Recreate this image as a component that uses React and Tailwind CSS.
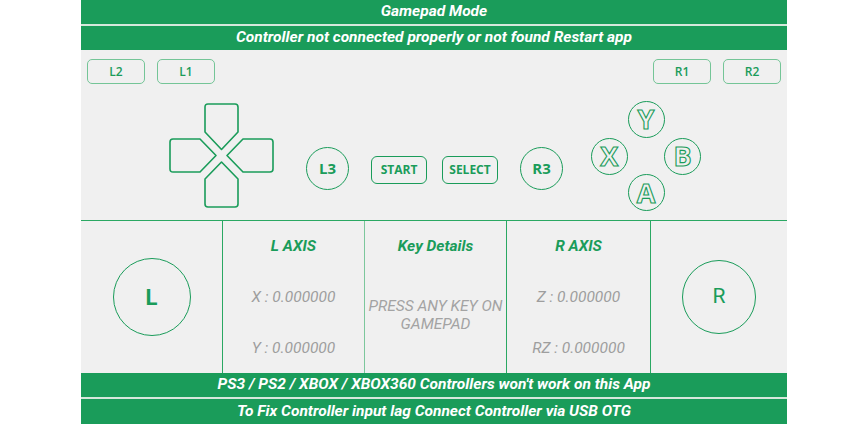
import React from "react";

const G = "#1a9c5a";

function DPad() {
  return (
    <svg width="105" height="105" viewBox="-1 -1 105 105" fill="none" stroke={G} strokeWidth="1.6" strokeLinejoin="round">
      <path d="M35,3 Q35,0 38,0 L65,0 Q68,0 68,3 L68,28 L51.5,45.5 L35,28 Z" />
      <path d="M3,35 L30,35 L46,51.5 L30,68 L3,68 Q0,68 0,65 L0,38 Q0,35 3,35 Z" />
      <path d="M100,35 Q103,35 103,38 L103,65 Q103,68 100,68 L73,68 L57,51.5 L73,35 Z" />
      <path d="M35,75 L51.5,58 L68,75 L68,100 Q68,103 65,103 L38,103 Q35,103 35,100 Z" />
    </svg>
  );
}

function Shoulder({ label }) {
  return (
    <div className="w-[58px] h-[25px] rounded-[5px] border border-[#74c597] flex items-center justify-center text-[12px] text-[#1a9c5a] font-semibold [font-family:'Open_Sans',sans-serif]">
      {label}
    </div>
  );
}

function Face({ l }) {
  return (
    <div className="w-[37px] h-[37px] rounded-full border-[1.5px] border-[#1a9c5a] flex items-center justify-center">
      <span className="text-[27px] leading-none font-bold text-transparent [-webkit-text-stroke:1.1px_#1a9c5a] [font-family:'Open_Sans',sans-serif] mt-[-1px]">
        {l}
      </span>
    </div>
  );
}

export default function App() {
  const bar = "bg-[#1a9c5a] flex items-center justify-center text-white font-bold italic [font-family:Roboto,sans-serif] text-[15.5px]";
  return (
    <div className="w-full bg-white">
      <div className="w-[706px] mx-auto bg-[#f0f0f0] flex flex-col">
        <div className={bar + " h-[24px]"}>Gamepad Mode</div>
        <div className="h-[2px] bg-[#d6e8dc]" />
        <div className={bar + " h-[24px]"}>Controller not connected properly or not found Restart app</div>

        <div className="h-[170px] flex flex-col">
          <div className="flex justify-between pt-[9px] pl-[6px] pr-[6px]">
            <div className="flex gap-[12px]">
              <Shoulder label="L2" />
              <Shoulder label="L1" />
            </div>
            <div className="flex gap-[12px]">
              <Shoulder label="R1" />
              <Shoulder label="R2" />
            </div>
          </div>
          <div className="flex items-start mt-[17px] pl-[88px]">
            <div className="mt-[2px]">
              <DPad />
            </div>
            <div className="ml-[32px] mt-[46px] w-[43px] h-[43px] rounded-full border-[1.5px] border-[#1a9c5a] flex items-center justify-center text-[15px] font-bold text-[#1a9c5a] [font-family:'Open_Sans',sans-serif]">
              L3
            </div>
            <div className="ml-[22px] mt-[55px] w-[56px] h-[28px] rounded-[6px] border-[1.5px] border-[#1a9c5a] flex items-center justify-center text-[12px] font-bold text-[#1a9c5a] [font-family:'Open_Sans',sans-serif]">
              START
            </div>
            <div className="ml-[15px] mt-[55px] w-[56px] h-[28px] rounded-[6px] border-[1.5px] border-[#1a9c5a] flex items-center justify-center text-[12px] font-bold text-[#1a9c5a] [font-family:'Open_Sans',sans-serif]">
              SELECT
            </div>
            <div className="ml-[22px] mt-[46px] w-[43px] h-[43px] rounded-full border-[1.5px] border-[#1a9c5a] flex items-center justify-center text-[15px] font-bold text-[#1a9c5a] [font-family:'Open_Sans',sans-serif]">
              R3
            </div>
            <div className="ml-[28px] w-[110px] h-[110px] grid grid-cols-3 grid-rows-3 place-items-center">
              <div />
              <Face l="Y" />
              <div />
              <Face l="X" />
              <div />
              <Face l="B" />
              <div />
              <Face l="A" />
              <div />
            </div>
          </div>
        </div>

        <div className="border-t border-[#2aa863] h-[153px] grid grid-cols-[141px_142px_142px_144px_137px] [font-family:Roboto,sans-serif]">
          <div className="flex items-center justify-center">
            <div className="w-[78px] h-[78px] rounded-full border-[1.5px] border-[#1a9c5a] flex items-center justify-center text-[22px] font-bold text-[#1a9c5a]">
              L
            </div>
          </div>
          <div className="border-l border-[#2aa863] flex flex-col items-center pt-[15px] gap-[31px]">
            <div className="text-[15.5px] leading-[20px] font-bold italic text-[#1a9c5a]">L AXIS</div>
            <div className="text-[15.5px] leading-[20px] italic text-[#9e9e9e]">X : 0.000000</div>
            <div className="text-[15.5px] leading-[20px] italic text-[#9e9e9e]">Y : 0.000000</div>
          </div>
          <div className="border-l border-[#7cc79c] flex flex-col items-center pt-[15px]">
            <div className="text-[15.5px] leading-[20px] font-bold italic text-[#1a9c5a]">Key Details</div>
            <div className="mt-[41px] text-[15.5px] leading-[18px] italic text-[#a3a3a3] text-center">
              PRESS ANY KEY ON
              <br />
              GAMEPAD
            </div>
          </div>
          <div className="border-l border-[#2aa863] flex flex-col items-center pt-[15px] gap-[31px]">
            <div className="text-[15.5px] leading-[20px] font-bold italic text-[#1a9c5a]">R AXIS</div>
            <div className="text-[15.5px] leading-[20px] italic text-[#9e9e9e]">Z : 0.000000</div>
            <div className="text-[15.5px] leading-[20px] italic text-[#9e9e9e]">RZ : 0.000000</div>
          </div>
          <div className="border-l border-[#2aa863] flex items-center justify-center">
            <div className="w-[74px] h-[74px] rounded-full border-[1.5px] border-[#1a9c5a] flex items-center justify-center text-[21px] text-[#1a9c5a]">
              R
            </div>
          </div>
        </div>

        <div className={bar + " h-[24px]"}>PS3 / PS2 / XBOX / XBOX360 Controllers won't work on this App</div>
        <div className="h-[2px] bg-[#d6e8dc]" />
        <div className={bar + " h-[25px]"}>To Fix Controller input lag Connect Controller via USB OTG</div>
      </div>
    </div>
  );
}
